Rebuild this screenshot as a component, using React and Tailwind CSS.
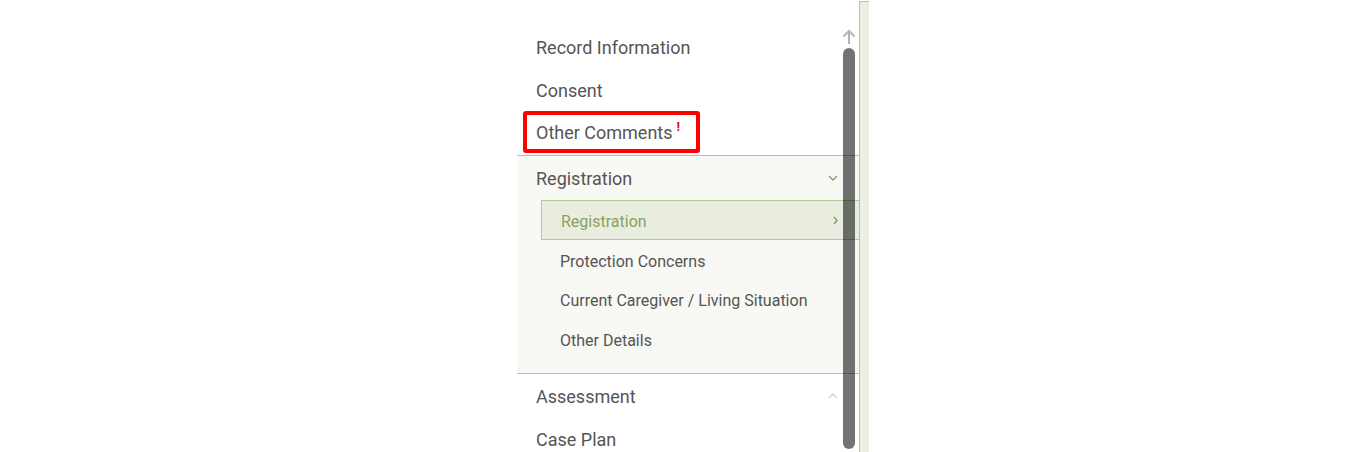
import React from "react";

const ChevronDown = ({ className }) => (
  <svg width="10" height="6" viewBox="0 0 10 6" className={className} fill="none" stroke="currentColor" strokeWidth="1.3">
    <path d="M1 1l4 4 4-4" />
  </svg>
);
const ChevronUp = ({ className }) => (
  <svg width="10" height="6" viewBox="0 0 10 6" className={className} fill="none" stroke="currentColor" strokeWidth="1.3">
    <path d="M1 5l4-4 4 4" />
  </svg>
);
const ChevronRight = ({ className }) => (
  <svg width="5" height="9" viewBox="0 0 5 9" className={className} fill="none" stroke="currentColor" strokeWidth="1.3">
    <path d="M1 1l3 3.5L1 8" />
  </svg>
);

export default function App() {
  const font = { fontFamily: "Roboto, 'Liberation Sans', sans-serif" };
  return (
    <div className="flex h-[452px] overflow-hidden bg-white pl-[517px]" style={font}>
      <div className="relative w-[342px] h-[452px]">
        <div className="pt-[26px] text-[18px] text-[#555]">
          <div className="h-[43px] flex items-center pl-[19px]">Record Information</div>
          <div className="h-[43px] flex items-center pl-[19px]">Consent</div>
          <div className="h-[43px] flex items-start">
            <div className="ml-[6px] mt-[-1px] h-[42px] flex items-center border-[4px] border-[#f00] rounded-[3px] pl-[9px] pr-[16px]">
              <span>Other Comments</span>
              <span className="text-[#e01010] text-[13px] self-start mt-[2px] ml-[4px] font-bold">!</span>
            </div>
          </div>
          <div className="border-t border-b border-[#b3c898] bg-[#f8f8f4] pb-[13px]">
            <div className="h-[44px] flex items-center justify-between pl-[19px] pr-[21px]">
              <span>Registration</span>
              <ChevronDown className="text-[#8d9c6b]" />
            </div>
            <div className="text-[16px]">
              <div className="ml-[24px] h-[40px] flex items-center justify-between border border-r-0 border-[#b3c898] bg-[#e8eddf] pl-[19px] pr-[21px] text-[#8aa160]">
                <span className="pt-[3px]">Registration</span>
                <ChevronRight className="text-[#7f9560]" />
              </div>
              <div className="h-[41px] flex items-center pl-[43px] pt-[2px]">Protection Concerns</div>
              <div className="h-[39px] flex items-center pl-[43px] pt-[1px]">Current Caregiver / Living Situation</div>
              <div className="h-[40px] flex items-center pl-[43px] pt-[2px]">Other Details</div>
            </div>
          </div>
          <div className="h-[44px] flex items-center justify-between pl-[19px] pr-[21px]">
            <span>Assessment</span>
            <ChevronUp className="text-[#c9d3de]" />
          </div>
          <div className="h-[43px] flex items-center pl-[19px]">Case Plan</div>
        </div>
        <svg className="absolute left-[325px] top-[29px]" width="14" height="15" viewBox="0 0 14 15" fill="none" stroke="#b4b4b4" strokeWidth="2">
          <path d="M7 15V2M1.5 7.5L7 2l5.5 5.5" />
        </svg>
        <div className="absolute left-[326px] top-[48px] w-[12px] h-[401px] rounded-full bg-black/55" />
      </div>
      <div className="mt-[1px] w-[10px] h-[451px] border-l border-t border-[#b3c898] bg-[#eaf0e3]" />
    </div>
  );
}
